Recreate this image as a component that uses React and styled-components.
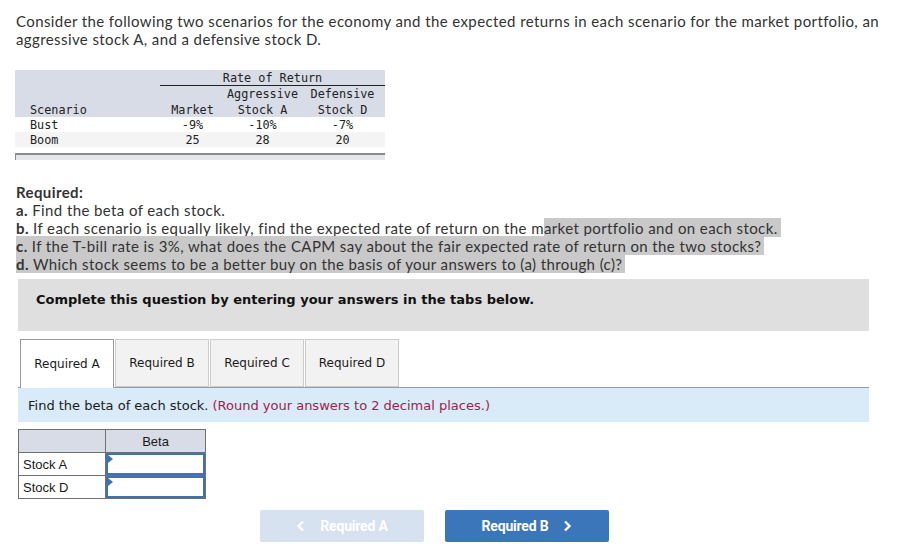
import React from 'react';
import styled, { createGlobalStyle } from 'styled-components';

const Global = createGlobalStyle`
  html, body { margin: 0; padding: 0; background: #fff; }
  body { font-family: Lato, "Liberation Sans", sans-serif; color: #333; }
  #root { width: 911px; height: 554px; }
`;

const Page = styled.div`
  width: 911px;
  height: 554px;
  overflow: hidden;
  box-sizing: border-box;
  padding: 12px 0 0 16px;
`;

const Para = styled.p`
  margin: 0;
  width: 890px;
  font-size: 15px;
  line-height: 18px;
  letter-spacing: 0.4px;
  color: #333;
`;

const DataGrid = styled.div`
  margin: 22px 0 0 -1px;
  width: 370px;
  display: grid;
  grid-template-columns: 145px 65px 75px 85px;
  grid-template-rows: 16px 16px 15px 15px 15px;
  font-family: "DejaVu Sans Mono", "Liberation Mono", monospace;
  font-size: 11.8px;
  color: #222;
`;

const tones = { head: '#d8dce6', white: '#ffffff', alt: '#f4f4f4' };

const DCell = styled.div`
  background: ${p => tones[p.$tone]};
  grid-column: ${p => p.$span ? `span ${p.$span}` : 'auto'};
  text-align: ${p => p.$left ? 'left' : 'center'};
  padding: 1px 0 0 ${p => p.$left ? '15px' : '0'};
  line-height: 15px;
  white-space: pre;
  box-sizing: border-box;
  border-bottom: ${p => p.$rule ? '1px solid #222' : 'none'};
`;

const FrameEdge = styled.div`
  margin: 6px 0 0 -1px;
  width: 370px;
  height: 7px;
  box-sizing: border-box;
  border-top: 2px solid #8a8a8a;
  border-left: 1px solid #8a8a8a;
  background: #e4e6ea;
`;

const Required = styled.div`
  margin-top: 23px;
  font-size: 15px;
  line-height: 18px;
  letter-spacing: 0.4px;
  color: #333;
`;

const Line = styled.div`
  white-space: nowrap;
`;

const Mark = styled.span`
  background: #c9c9c9;
  padding: 1px 3px 0 0;
`;

const Notice = styled.div`
  margin: 6px 0 0 2px;
  width: 851px;
  height: 52px;
  box-sizing: border-box;
  background: #dfdfdf;
  padding: 13px 18px;
  font-family: "DejaVu Sans", Verdana, sans-serif;
  font-weight: bold;
  font-size: 13px;
  line-height: 16px;
  color: #111;
`;

const TabRow = styled.div`
  margin: 8px 0 0 4px;
  display: flex;
  gap: 1px;
  align-items: flex-end;
  position: relative;
  z-index: 1;
`;

const Tab = styled.div`
  width: 94px;
  height: ${p => p.$active ? '49px' : '48px'};
  margin-bottom: ${p => p.$active ? '-1px' : '0'};
  box-sizing: border-box;
  display: flex;
  align-items: center;
  justify-content: center;
  padding-bottom: ${p => p.$active ? '1px' : '0'};
  background: ${p => p.$active ? '#fff' : '#f2f2f2'};
  border: 1px solid ${p => p.$active ? '#9a9a9a' : '#cccccc'};
  border-bottom: ${p => p.$active ? 'none' : '1px solid #cccccc'};
  font-family: "DejaVu Sans", Verdana, sans-serif;
  font-size: 12px;
  color: #1a1a1a;
`;

const InfoBar = styled.div`
  margin-left: 2px;
  width: 851px;
  height: 35px;
  box-sizing: border-box;
  border-top: 1px solid #9a9a9a;
  background: #d9ebf9;
  padding: 0 10px;
  display: flex;
  align-items: center;
  font-family: "DejaVu Sans", Verdana, sans-serif;
  font-size: 13px;
  color: #1a1a1a;
`;

const Hint = styled.span`
  color: #a3204a;
  margin-left: 4px;
`;

const AnswerTable = styled.table`
  margin: 7px 0 0 2px;
  border-collapse: collapse;
  font-family: "Liberation Sans", Arial, sans-serif;
  font-size: 13px;
  color: #1a1a1a;
`;

const Th = styled.th`
  height: 22px;
  width: ${p => p.$w}px;
  padding: 0;
  background: #d8dce6;
  border: 1px solid #707070;
  font-weight: normal;
  text-align: center;
`;

const LabelTd = styled.td`
  height: 22px;
  padding: 0 0 0 4px;
  border: 1px solid #707070;
  text-align: left;
`;

const InputTd = styled.td`
  height: 22px;
  padding: 0;
  border: 1px solid #707070;
  position: relative;
`;

const AnswerInput = styled.div`
  height: 22px;
  box-sizing: border-box;
  border: 2px solid #3f72af;
  background: #fff;
  position: relative;
  &::before {
    content: '';
    position: absolute;
    left: 0;
    top: 0;
    border-style: solid;
    border-width: 4px 0 4px 5px;
    border-color: transparent transparent transparent #3f72af;
  }
`;

const NavRow = styled.div`
  margin: 11px 0 0 244px;
  display: flex;
  gap: 21px;
`;

const NavButton = styled.div`
  width: 164px;
  height: 32px;
  box-sizing: border-box;
  border-radius: 2px;
  background: ${p => p.$disabled ? '#d6e2f0' : '#3a76b9'};
  color: #fff;
  display: flex;
  align-items: center;
  justify-content: center;
  gap: 14px;
  font-family: Roboto, "Liberation Sans", sans-serif;
  font-weight: bold;
  font-size: 14px;
  letter-spacing: -0.2px;
`;

const Chevron = ({ dir }) => (
  <svg width="10" height="12" viewBox="0 0 10 12">
    <path
      d={dir === 'left' ? 'M7 1.5 L2.5 6 L7 10.5' : 'M3 1.5 L7.5 6 L3 10.5'}
      fill="none"
      stroke="#fff"
      strokeWidth="2.4"
      strokeLinecap="butt"
      strokeLinejoin="miter"
    />
  </svg>
);

export default function App() {
  return (
    <Page>
      <Global />
      <Para>
        Consider the following two scenarios for the economy and the expected returns in each scenario for the market portfolio, an aggressive stock A, and a defensive stock D.
      </Para>

      <DataGrid>
        <DCell $tone="head" />
        <DCell $tone="head" $span={3} $rule>Rate of Return</DCell>
        <DCell $tone="head" />
        <DCell $tone="head" />
        <DCell $tone="head">Aggressive</DCell>
        <DCell $tone="head">Defensive</DCell>
        <DCell $tone="head" $left>Scenario</DCell>
        <DCell $tone="head">Market</DCell>
        <DCell $tone="head">Stock A</DCell>
        <DCell $tone="head">Stock D</DCell>
        <DCell $tone="white" $left>Bust</DCell>
        <DCell $tone="white">-9%</DCell>
        <DCell $tone="white">-10%</DCell>
        <DCell $tone="white">-7%</DCell>
        <DCell $tone="alt" $left>Boom</DCell>
        <DCell $tone="alt">25</DCell>
        <DCell $tone="alt">28</DCell>
        <DCell $tone="alt">20</DCell>
      </DataGrid>
      <FrameEdge />

      <Required>
        <Line><b>Required:</b></Line>
        <Line><b>a.</b> Find the beta of each stock.</Line>
        <Line><b>b.</b> If each scenario is equally likely, find the expected rate of return on the m<Mark>arket portfolio and on each stock.</Mark></Line>
        <Line><Mark><b>c.</b> If the T-bill rate is 3%, what does the CAPM say about the fair expected rate of return on the two stocks?</Mark></Line>
        <Line><Mark><b>d.</b> Which stock seems to be a better buy on the basis of your answers to (a) through (c)?</Mark></Line>
      </Required>

      <Notice>Complete this question by entering your answers in the tabs below.</Notice>

      <TabRow>
        <Tab $active>Required A</Tab>
        <Tab>Required B</Tab>
        <Tab>Required C</Tab>
        <Tab>Required D</Tab>
      </TabRow>
      <InfoBar>
        Find the beta of each stock.<Hint>(Round your answers to 2 decimal places.)</Hint>
      </InfoBar>

      <AnswerTable>
        <thead>
          <tr>
            <Th $w={86}></Th>
            <Th $w={99}>Beta</Th>
          </tr>
        </thead>
        <tbody>
          <tr>
            <LabelTd>Stock A</LabelTd>
            <InputTd><AnswerInput /></InputTd>
          </tr>
          <tr>
            <LabelTd>Stock D</LabelTd>
            <InputTd><AnswerInput /></InputTd>
          </tr>
        </tbody>
      </AnswerTable>

      <NavRow>
        <NavButton $disabled><Chevron dir="left" />Required A</NavButton>
        <NavButton>Required B<Chevron dir="right" /></NavButton>
      </NavRow>
    </Page>
  );
}
